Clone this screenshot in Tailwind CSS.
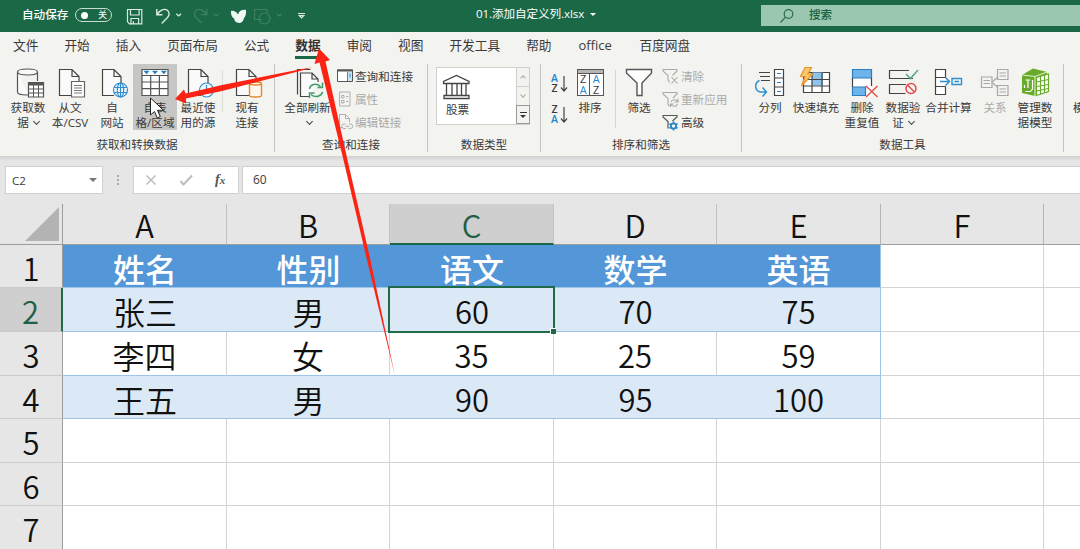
<!DOCTYPE html>
<html lang="zh-CN">
  <head>
    <meta charset="UTF-8" />
    <meta name="viewport" content="width=device-width, initial-scale=1.0" />
    <title>01.添加自定义列.xlsx</title>
    <script src="https://cdn.jsdelivr.net/npm/@tailwindcss/browser@4"></script>
  </head>
  <body class="relative w-[1080px] h-[549px] overflow-hidden flex flex-col bg-[#e6e6e6] text-[#3b3a39] font-['Open_Sans','Noto_Sans_CJK_SC',sans-serif]">
    <!-- Title bar -->
    <header class="h-8 shrink-0 flex items-start bg-[#1a6846] text-white">
      <span class="w-[53px] ml-[22px] leading-[29px] text-[11.6px] font-medium whitespace-nowrap">自动保存</span>
      <div class="mt-2 w-[37px] h-[14px] rounded-full border border-[#c9ddd2] flex items-center justify-between pl-[5px] pr-[4px]">
        <span class="w-[7px] h-[7px] rounded-full bg-white"></span>
        <span class="text-[9px] leading-[12px]">关</span>
      </div>
      <svg class="ml-[8px] w-[190px] h-8" viewBox="120 0 190 32" fill="none" stroke="#dcebe2" stroke-width="1.2">
        <path d="M127.5 9.5h14.3v14.3h-12.3l-2-2zM130.5 9.5v5.5h8.6V9.5M131 23.8v-5.3h7.6v5.3M133.4 21.2v2.6" />
        <path d="M156.8 9v5.7h5.6M157 14.5c3-4.6 7.5-6.300 10.300-4.200 2.500 1.900 2.200 5.200.2 7.300l-5.800 5.800" stroke-width="1.400" />
        <path d="M176.300 13.700l2.400 2.200 2.400-2.200" stroke-width="1.300" />
        <g stroke="#3f8263">
          <path d="M206.800 9v5.700h-5.600M206.600 14.500c-3-4.600-7.500-6.300-10.300-4.200-2.500 1.900-2.200 5.200-.2 7.300l5.400 5.400" />
          <path d="M214 13.700l2.400 2.200 2.400-2.200M276.800 13.700l2.400 2.200 2.400-2.200" />
          <path d="M262 19.500h-7.500V9.500H267v3.500" />
          <circle cx="264.500" cy="18.500" r="5.500" />
        </g>
        <path d="M231 11c2.500-.6 5.300.6 7 3.600.8-3.200 3.800-5.300 8-4.600.3 3.500-.2 6.500-2.200 8.200.2 1.700-1.800 4.800-4.600 4.800-3.400-.3-5.200-2.300-4.900-4.300-2.400-1-3.500-4-3.300-7.700z" fill="#eef7f1" stroke="none" />
        <path d="M298 13.500h7M299.300 15.600h4.400l-2.200 2.200z" />
      </svg>
      <span class="ml-[166px] leading-[28px] text-[11.6px] tracking-[-0.1px] whitespace-nowrap">01.添加自定义列.xlsx</span>
      <span class="ml-[6px] mt-[13px] border-x-[3px] border-t-[3px] border-x-transparent border-t-white"></span>
      <div class="ml-auto mt-[5px] w-[319px] h-[21px] flex items-center bg-[#9bc7b0] text-[#17603f]">
        <svg class="ml-[18px] w-4 h-4" viewBox="0 0 16 16" fill="none" stroke="#2d6b4c" stroke-width="1.200">
          <circle cx="9.500" cy="6" r="4.300" />
          <path d="M6.500 9.200L1.500 14.500" />
        </svg>
        <span class="ml-[14px] text-[11.600px] leading-[18px] mb-[2px] font-medium">搜索</span>
      </div>
    </header>

    <!-- Ribbon tabs -->
    <nav class="h-7 shrink-0 flex gap-[26px] pl-[13px] bg-[#f3f3f0] text-[12.700px] leading-[27px] whitespace-nowrap">
      <a>文件</a>
      <a>开始</a>
      <a>插入</a>
      <a>页面布局</a>
      <a>公式</a>
      <a class="h-[27px] border-b-[3px] border-[#1a6846] font-semibold text-[#333]">数据</a>
      <a>审阅</a>
      <a>视图</a>
      <a>开发工具</a>
      <a>帮助</a>
      <a class="ml-px w-[35px] text-[13px]">office</a>
      <a>百度网盘</a>
    </nav>

    <!-- Ribbon -->
    <section class="h-24 shrink-0 flex pt-1 bg-[#f3f3f0] text-[11.600px] leading-[15px] text-center whitespace-nowrap">
      <!-- Get & transform -->
      <div class="w-[275px] h-[88px] flex flex-col border-r border-[#c4c4c2]">
        <div class="h-[75px] flex pl-[7px]">
          <div class="w-[42px]">
            <svg class="w-full h-9" viewBox="7 64 42 36" fill="none" stroke="#555" stroke-width="1.200">
              <path d="M17.500 72v20c0 1.800 4 3 9 3h2M37.500 72v9M17.500 72c0-4 20-4 20 0s-20 4-20 0z" fill="#fafafa" />
              <path d="M28.500 82.500h15v14.500h-15z" fill="#fff" />
              <path d="M28.500 84h15" stroke-width="3" />
              <path d="M28.500 89h15M28.500 93h15M33.500 83v14M38.500 83v14" stroke-width="1" />
            </svg>
            <div>获取数<br />据 <span class="inline-block w-[5px] h-[5px] mb-[3px] ml-[2px] border-r border-b border-[#444] rotate-45"></span></div>
          </div>
          <div class="w-[42px]">
            <svg class="w-full h-9" viewBox="49 64 42 36" fill="none" stroke="#444" stroke-width="1.200">
              <path d="M71 95.500H59.500v-26H72l7 7V81M72 69.500v7h7" fill="#fafafa" />
              <path d="M71.500 81.500h13v15.500h-13z" fill="#fff" stroke="#666" />
              <path d="M74 85.500h8M74 88h8M74 90.500h8M74 93h8" stroke="#777" stroke-width="1" />
            </svg>
            <div class="flex flex-col items-center"><span>从文</span><span>本/CSV</span></div>
          </div>
          <div class="w-[42px]">
            <svg class="w-full h-9" viewBox="91 64 42 36" fill="none" stroke="#444" stroke-width="1.200">
              <path d="M114 95.500H102.500v-26H114l7 7V83M114 69.500v7h7" fill="#fafafa" />
              <g stroke="#2f8fcf">
                <circle cx="120.500" cy="90" r="7" fill="#f3fafe" />
                <ellipse cx="120.500" cy="90" rx="3.200" ry="7" />
                <path d="M120.500 83v14M114 87.500h13M114 92.500h13" />
              </g>
            </svg>
            <div>自<br />网站</div>
          </div>
          <div class="w-[44px] h-[66px] bg-[#c6c6c5]">
            <svg class="w-full h-9" viewBox="132.500 64 44 36" fill="none" stroke="#555" stroke-width="1.200">
              <path d="M141.500 69.500h26v26h-26z" fill="#fff" />
              <path d="M141.500 75.500h26M141.500 82h26M141.500 88.700h26M150.200 75.500v20M158.900 75.500v20" />
              <path d="M143.500 71h5l-2.500 3zM152 71h5l-2.500 3zM160.800 71h5l-2.500 3z" fill="#1f7fc4" stroke="#1f7fc4" stroke-width=".5" />
            </svg>
            <div>自表<br />格/区域</div>
          </div>
          <div class="w-[42px]">
            <svg class="w-full h-9" viewBox="176 64 42 36" fill="none" stroke="#444" stroke-width="1.200">
              <path d="M200 95.500H187.500v-26H200l7 7V83M200 69.500v7h7" fill="#fafafa" />
              <circle cx="205.500" cy="90" r="7" fill="#f3fafe" stroke="#2f8fcf" />
              <path d="M205.500 85v5.500h4.500" stroke="#2f8fcf" />
            </svg>
            <div>最近使<br />用的源</div>
          </div>
          <div class="w-px h-[42px] mt-1.5 mx-[3px] bg-[#dcdcda]"></div>
          <div class="w-[42px]">
            <svg class="w-full h-9" viewBox="226 64 42 36" fill="none" stroke="#444" stroke-width="1.200">
              <path d="M250 95.500H236.500v-26H249l7 7V81M249 69.500v7h7" fill="#fafafa" />
              <path d="M249.500 83.500v12c0 2 12 2 12 0v-12c0-2-12-2-12 0s12 2 12 0" fill="#fdf6ec" stroke="#e08a2c" stroke-width="1.400" />
            </svg>
            <div>现有<br />连接</div>
          </div>
        </div>
        <div>获取和转换数据</div>
      </div>

      <!-- Queries & connections -->
      <div class="w-[153px] h-[88px] flex flex-col border-r border-[#c4c4c2]">
        <div class="h-[75px] flex pl-[7px]">
          <div class="w-[51px]">
            <svg class="w-full h-9" viewBox="282 64 51 36" fill="none" stroke="#444" stroke-width="1.200">
              <path d="M297.500 94.500v-25h13" />
              <path d="M309 96.500h-8.500v-23.500H312l6 6v3M312 73v6h6" fill="#fafafa" />
              <g stroke="#3f9d6c" stroke-width="1.500">
                <path d="M309.500 89c.5-4 6-7 11-2.500M322.500 82.500v5h-5M322.500 92c-1 4-7 6.500-11.500 2.500M309.500 98v-5h5" />
              </g>
            </svg>
            <div class="flex flex-col items-center"><span>全部刷新</span><span class="w-[5px] h-[5px] mt-[4px] ml-[3px] border-r border-b border-[#444] rotate-45"></span></div>
          </div>
          <div class="ml-[3px] pt-px flex flex-col gap-[1px] text-left">
            <div class="h-[22px] flex items-center gap-[2px]">
              <svg class="w-[17px] h-4" viewBox="336 68 17 16" fill="none" stroke="#555">
                <path d="M337.500 70h15v11.500h-15z" fill="#fff" />
                <path d="M337 70.500h16" stroke-width="2" />
                <path d="M347.500 72v9" stroke="#2f8fcf" />
                <path d="M348 72h4v9h-4z" fill="#cbe6f7" stroke="none" />
                <path d="M350 73.500v4" stroke="#2f8fcf" />
              </svg>
              <span>查询和连接</span>
            </div>
            <div class="h-[22px] flex items-center gap-[2px] text-[#aaa]">
              <svg class="w-[17px] h-4" viewBox="336 91 17 16" fill="none" stroke="#b0b0b0">
                <path d="M339.500 92h10.500v14h-10.500zM341.500 95.500h2.500v2.500h-2.500zM341.500 100.500h2.500v2.500h-2.500zM346 96.500h2.500M346 101.500h2.500" />
              </svg>
              <span>属性</span>
            </div>
            <div class="h-[22px] flex items-center gap-[2px] text-[#aaa]">
              <svg class="w-[17px] h-4" viewBox="336 114 17 16" fill="none" stroke="#b0b0b0">
                <path d="M342 127.500h-2.500v-13h6l4 4v3.500M345.500 114.500v4h4" />
                <path d="M345.500 124h-1.500a2 2 0 0 0 0 4.500h2M349 124h1.500a2 2 0 0 1 0 4.500h-2M345.500 126.300h4" />
              </svg>
              <span>编辑链接</span>
            </div>
          </div>
        </div>
        <div>查询和连接</div>
      </div>

      <!-- Data types -->
      <div class="w-[113px] h-[88px] flex flex-col border-r border-[#c4c4c2]">
        <div class="h-[75px] pl-2 pt-[3px]">
          <div class="w-[94px] h-[58px] flex border border-[#cfcfcf] bg-white">
            <div class="w-[79px] pt-[6px] pr-[39px]">
              <svg class="ml-[5px] w-7 h-[27px]" viewBox="442 74 28 27" fill="none" stroke="#444" stroke-width="1.300">
                <path d="M443.500 83.500v-2L456.500 75.500l12.500 6v2zM444 95.500h25v3h-25z" />
                <path d="M446.500 84v11M452 84v11M457 84v11M461.500 84v11M466 84v11" />
              </svg>
              <div class="mt-[1px] pl-[1px]">股票</div>
            </div>
            <div class="w-[13px] flex flex-col border-l border-[#cfcfcf] bg-[#f3f3f0]">
              <div class="h-[19px] flex items-center justify-center border-b border-[#cfcfcf]"><span class="w-1 h-1 mt-[2px] border-l border-t border-[#aaa] rotate-45"></span></div>
              <div class="h-[18px] flex items-center justify-center"><span class="w-1 h-1 mb-[2px] border-r border-b border-[#aaa] rotate-45"></span></div>
              <div class="h-[19px] -ml-px -mr-px flex flex-col items-center justify-center gap-[2px] border border-[#999]">
                <span class="w-[7px] h-px bg-[#333]"></span>
                <span class="border-x-[3px] border-t-[3px] border-x-transparent border-t-[#333]"></span>
              </div>
            </div>
          </div>
        </div>
        <div>数据类型</div>
      </div>

      <!-- Sort & filter -->
      <div class="w-[201px] h-[88px] flex flex-col border-r border-[#c4c4c2]">
        <div class="h-[75px] flex pl-[9px]">
          <div class="w-[20px] flex flex-col pt-[9px] gap-[9px] text-[10.500px] leading-[10px] font-semibold">
            <div class="h-[22px] flex gap-px">
              <div class="w-[9px]"><div class="text-[#2188cc]">A</div><div>Z</div></div>
              <svg class="w-[8px] h-[20px]" viewBox="0 0 8 20" fill="none" stroke="#444" stroke-width="1.200"><path d="M4 3v15M1 14.500l3 3.500 3-3.500" /></svg>
            </div>
            <div class="h-[22px] flex gap-px">
              <div class="w-[9px]"><div>Z</div><div class="text-[#2188cc]">A</div></div>
              <svg class="w-[8px] h-[20px]" viewBox="0 0 8 20" fill="none" stroke="#444" stroke-width="1.200"><path d="M4 3v15M1 14.500l3 3.500 3-3.500" /></svg>
            </div>
          </div>
          <div class="w-10">
            <div class="h-9 pt-[5px] flex justify-center">
              <div class="w-[27px] h-[27px] border border-[#555] bg-white text-[11px] leading-[10.500px]">
                <div class="h-1 bg-[#b5b5b5] border-b border-[#555]"></div>
                <div class="h-[21px] grid grid-cols-2 divide-x divide-[#555]">
                  <div><div>Z</div><div class="text-[#2188cc]">A</div></div>
                  <div><div class="text-[#2188cc]">A</div><div>Z</div></div>
                </div>
              </div>
            </div>
            <div>排序</div>
          </div>
          <div class="w-px h-[58px] mt-1.5 ml-[5px] bg-[#d4d4d2]"></div>
          <div class="w-[46px]">
            <svg class="w-full h-9" viewBox="616 64 46 36" fill="none" stroke="#555" stroke-width="1.400">
              <path d="M626.500 69.500h25v3.500l-9.500 10v12.500h-5V83l-10.500-10z" fill="#fff" />
            </svg>
            <div>筛选</div>
          </div>
          <div class="pt-px flex flex-col gap-[1px] text-left">
            <div class="h-[22px] flex items-center gap-[2px] text-[#aaa]">
              <svg class="w-[17px] h-[17px]" viewBox="0 0 17 17" fill="none" stroke="#aaa" stroke-width="1.100"><path d="M8 14.500L6 12V7.500L1 3V1.500h14V3l-4.500 4.500M9.500 9l6 6.500M15.500 9l-6 6.500" /></svg>
              <span>清除</span>
            </div>
            <div class="h-[22px] flex items-center gap-[2px] text-[#aaa]">
              <svg class="w-[17px] h-[17px]" viewBox="0 0 17 17" fill="none" stroke="#aaa" stroke-width="1.100"><path d="M7.500 15L6 13.500V7.500L1 3V1.500h14V3l-4 4M9 11c1-3 5-3 6.500-.5M16 7.500v3.500h-3.500M15.500 13c-1 3-5 3-6.500.5M8.500 16v-3H12" /></svg>
              <span>重新应用</span>
            </div>
            <div class="h-[22px] flex items-center gap-[2px]">
              <svg class="w-[17px] h-[17px]" viewBox="0 0 17 17" fill="none" stroke="#555" stroke-width="1.200"><path d="M6 14.500V7.500L1 3V1.500h14V3l-4.500 4" /><circle cx="11.500" cy="12" r="2.600" stroke="#2188cc" stroke-width="1.800" /><path d="M11.500 7.500v2M11.500 14.500v2M7.500 9.800l1.700 1M13.800 13.200l1.700 1M7.500 14.200l1.700-1M13.800 10.800l1.700-1" stroke="#2188cc" stroke-width="1.600" /></svg>
              <span>高级</span>
            </div>
          </div>
        </div>
        <div>排序和筛选</div>
      </div>

      <!-- Data tools -->
      <div class="w-[322px] h-[88px] flex flex-col border-r border-[#c4c4c2]">
        <div class="h-[75px] flex pl-2">
          <div class="w-10">
            <svg class="w-full h-9" viewBox="750 64 40 36" fill="none" stroke="#444" stroke-width="1.200">
              <path d="M759 72.500h11M760 76.500h10M761 80.500h9" />
              <path d="M774.500 69.500h9v26h-9zM774.500 78h9M774.500 87h9" fill="#fff" />
              <path d="M777 73.500h4M777 82.500h4M777 91.500h4" stroke="#2188cc" />
              <path d="M759.500 80.500c-5 2-5.500 10 1 11.500h5.500M762.500 87.500l4 4.500-4 4.500" stroke="#2f8fcf" stroke-width="1.500" />
            </svg>
            <div>分列</div>
          </div>
          <div class="w-[52px]">
            <svg class="w-full h-9" viewBox="790 64 52 36" fill="none" stroke="#444" stroke-width="1.200">
              <path d="M803.500 72.500h26v20h-26z" fill="#fff" />
              <path d="M812 72.500h11v13h-11z" fill="#8cc4ec" stroke="none" />
              <path d="M803 79.500h26.500M803 86h26.500M812 72.500v20M822 72.500v20" />
              <path d="M805 67.500h6.500l-3.500 6.500h4.500L801.500 86l3.500-9.500h-4.500z" fill="#fbc768" stroke="#e8912d" />
            </svg>
            <div>快速填充</div>
          </div>
          <div class="w-10">
            <svg class="w-full h-9" viewBox="842 64 40 36" fill="none" stroke="#444" stroke-width="1.200">
              <path d="M852.500 69.500h19v26h-19z" fill="#fff" stroke="none" />
              <path d="M852.500 69.500h19v8.500h-19zM852.500 87h13v8.500h-13z" fill="#6db4ea" stroke="#2c7fc0" />
              <path d="M852.500 78v9M871.500 78v8" />
              <path d="M866 86l11.500 11M877.500 86L866 97" stroke="#e0504f" stroke-width="1.400" />
            </svg>
            <div>删除<br />重复值</div>
          </div>
          <div class="w-[42px]">
            <svg class="w-full h-9" viewBox="882 64 42 36" fill="none" stroke="#444" stroke-width="1.200">
              <path d="M909 70.500h-19.500v8H913M906 84.500h-16.500v9h16" />
              <path d="M906 74l4.500 4.500 7.500-8.500" stroke="#5aa888" stroke-width="1.600" />
              <circle cx="911" cy="88.500" r="5" stroke="#e0504f" stroke-width="1.500" />
              <path d="M907.500 85l7 7" stroke="#e0504f" stroke-width="1.500" />
            </svg>
            <div>数据验<br />证 <span class="inline-block w-[5px] h-[5px] mb-[3px] ml-[2px] border-r border-b border-[#444] rotate-45"></span></div>
          </div>
          <div class="w-[49px]">
            <svg class="w-full h-9" viewBox="924 64 49 36" fill="none" stroke="#444" stroke-width="1.200">
              <path d="M945.500 77.500v-8h-10v25h10v-8M935.500 77.500h10M935.500 86.500h10" fill="#fff" />
              <path d="M940 81.500h9M945.500 77.500l4 4-4 4M952 78.500h9.500v6H952zM954.500 81.500h4.500" stroke="#2f8fcf" stroke-width="1.400" />
            </svg>
            <div>合并计算</div>
          </div>
          <div class="w-11 text-[#aaa]">
            <svg class="w-full h-9" viewBox="973 64 44 36" fill="none" stroke="#a8a8a8" stroke-width="1.200">
              <path d="M981.500 77h10.500v10.500h-10.500zM983.500 80.500h6.500M983.500 83.500h6.500" />
              <path d="M997.500 69.500H1008v10h-10.500zM999.500 73h6.500M999.500 76h6.500M997.500 85.500H1008v10h-10.500zM999.500 89h6.500M999.500 92h6.500" />
              <path d="M992 82l6-5M992 82.500l6 5" />
            </svg>
            <div>关系</div>
          </div>
          <div class="w-9">
            <svg class="w-full h-9" viewBox="1017 64 36 36" fill="none" stroke="#fff" stroke-width="1.200">
              <path d="M1022 75l11-6.500 14 3.500v19l-12 5-13-3z" fill="#6aaa2a" stroke="none" />
              <path d="M1022 75l13 1.500v20M1035 76.500l12-4.500" stroke="#d9eec4" />
              <path d="M1036.500 77.500l12-3.500v17.500l-12 4z" fill="#fff" stroke="#6aaa2a" />
              <path d="M1036.500 82l12-2.500M1036.500 86.500l12-2M1036.500 91l12-2.500M1040.500 76.500v18M1044.500 75v18" stroke="#6aaa2a" />
              <path d="M1025.500 80h4.500M1028 80v8M1024.500 88v-3M1030.500 91.500h-5M1032.500 80v9l-2 2.500" />
            </svg>
            <div>管理数<br />据模型</div>
          </div>
        </div>
        <div>数据工具</div>
      </div>
      <div class="w-4 pt-9 pl-[9px] overflow-hidden text-left">模</div>
    </section>
    <div class="h-[5px] shrink-0 bg-linear-to-b from-[#d0d0d0] to-[#e6e6e6]"></div>

    <!-- Formula bar -->
    <section class="h-[43px] shrink-0 flex pt-[5px] pl-[5px] text-[12px] leading-[25px]">
      <div class="w-[98px] h-[28px] flex items-center justify-between pl-[6px] pr-[5px] bg-white border border-[#cfcfcf]">
        <span class="text-[11.500px]">C2</span>
        <span class="border-x-[4px] border-t-[4px] border-x-transparent border-t-[#777]"></span>
      </div>
      <div class="w-[30px] h-[28px] flex flex-col items-center justify-center gap-[2px]">
        <span class="size-[2px] bg-[#aaa]"></span>
        <span class="size-[2px] bg-[#aaa]"></span>
        <span class="size-[2px] bg-[#aaa]"></span>
      </div>
      <div class="w-[106px] h-[28px] flex items-center bg-white border border-[#cfcfcf]">
        <svg class="w-[81px] h-[26px]" viewBox="134 167 81 26" fill="none" stroke="#bdbdbd" stroke-width="1.500">
          <path d="M146.500 175.500l9 9M155.500 175.500l-9 9" />
          <path d="M180.500 181l3 3.500 8.500-9" stroke-width="2" />
        </svg>
        <span class="font-['Liberation_Serif',serif] italic font-bold text-[14px] leading-[20px] text-[#555]">f<span class="text-[11px]">x</span></span>
      </div>
      <div class="ml-[3px] flex-1 h-[28px] pl-[10px] bg-white border border-r-0 border-[#cfcfcf]">60</div>
    </section>

    <!-- Sheet -->
    <main class="relative h-[345px] shrink-0 grid grid-cols-[63px_164px_163px_164px_163px_164px_163px_36px] grid-rows-[41px_43px_44px_44px_43px_44px_43px_43px] bg-white text-center text-[31px] leading-[46px] text-[#111] font-[350] font-['Noto_Sans_CJK_SC',sans-serif]">
      <!-- Column headers -->
      <div class="flex items-end justify-end pr-[3px] pb-[3px] bg-[#e6e6e6] border-r border-b border-[#9c9c9c]"><svg class="w-[34px] h-[34px]" viewBox="0 0 34 34"><path d="M34 0v34H0z" fill="#b3b3b3" /></svg></div>
      <div class="bg-[#e6e6e6] border-r border-b border-r-[#c2c2c2] border-b-[#9c9c9c] leading-[42px]">A</div>
      <div class="bg-[#e6e6e6] border-r border-b border-r-[#c2c2c2] border-b-[#9c9c9c] leading-[42px]">B</div>
      <div class="bg-[#cfcfcf] border-r border-b-2 border-r-[#c2c2c2] border-b-[#1a6846] text-[#1f6046] leading-[42px]">C</div>
      <div class="bg-[#e6e6e6] border-r border-b border-r-[#c2c2c2] border-b-[#9c9c9c] leading-[42px]">D</div>
      <div class="bg-[#e6e6e6] border-r border-b border-r-[#b4b4b4] border-b-[#9c9c9c] leading-[42px]">E</div>
      <div class="bg-[#e6e6e6] border-r border-b border-r-[#b4b4b4] border-b-[#9c9c9c] leading-[42px]">F</div>
      <div class="bg-[#e6e6e6] border-b border-[#9c9c9c]"></div>

      <!-- Row 1 -->
      <div class="bg-[#e6e6e6] border-r border-b border-r-[#9c9c9c] border-b-[#cacaca]">1</div>
      <div class="bg-[#5397d8] border-b border-[#9dc3e6] text-white text-[32px] font-medium">姓名</div>
      <div class="bg-[#5397d8] border-b border-[#9dc3e6] text-white text-[32px] font-medium">性别</div>
      <div class="bg-[#5397d8] border-b border-[#9dc3e6] text-white text-[32px] font-medium">语文</div>
      <div class="bg-[#5397d8] border-b border-[#9dc3e6] text-white text-[32px] font-medium">数学</div>
      <div class="bg-[#5397d8] border-r border-b border-[#9dc3e6] text-white text-[32px] font-medium">英语</div>
      <div class="border-r border-b border-[#d4d4d4]"></div>
      <div class="border-b border-[#d4d4d4]"></div>

      <!-- Row 2 -->
      <div class="bg-[#cfcfcf] border-r-2 border-b border-r-[#1f6b47] border-b-[#cacaca] text-[#1f6046]">2</div>
      <div class="bg-[#dbe8f5] border-b border-[#9dc3e6] text-[32px]">张三</div>
      <div class="bg-[#dbe8f5] border-b border-[#9dc3e6] text-[32px]">男</div>
      <div class="relative bg-[#dbe8f5] border-b border-[#9dc3e6]">
        60
        <div class="absolute -left-[2px] -top-[2px] w-[167px] h-[47px] border-2 border-[#1f6b47]"></div>
        <div class="absolute -right-[2px] -bottom-[3px] size-[6px] border-l border-t border-white bg-[#1f6b47]"></div>
      </div>
      <div class="bg-[#dbe8f5] border-b border-[#9dc3e6]">70</div>
      <div class="bg-[#dbe8f5] border-r border-b border-[#9dc3e6]">75</div>
      <div class="border-r border-b border-[#d4d4d4]"></div>
      <div class="border-b border-[#d4d4d4]"></div>

      <!-- Row 3 -->
      <div class="bg-[#e6e6e6] border-r border-b border-r-[#9c9c9c] border-b-[#cacaca]">3</div>
      <div class="border-r border-b border-r-[#d4d4d4] border-b-[#9dc3e6] text-[32px]">李四</div>
      <div class="border-r border-b border-r-[#d4d4d4] border-b-[#9dc3e6] text-[32px]">女</div>
      <div class="border-r border-b border-r-[#d4d4d4] border-b-[#9dc3e6]">35</div>
      <div class="border-r border-b border-r-[#d4d4d4] border-b-[#9dc3e6]">25</div>
      <div class="border-r border-b border-[#9dc3e6]">59</div>
      <div class="border-r border-b border-[#d4d4d4]"></div>
      <div class="border-b border-[#d4d4d4]"></div>

      <!-- Row 4 -->
      <div class="bg-[#e6e6e6] border-r border-b border-r-[#9c9c9c] border-b-[#cacaca]">4</div>
      <div class="bg-[#dbe8f5] border-b border-[#9dc3e6] text-[32px]">王五</div>
      <div class="bg-[#dbe8f5] border-b border-[#9dc3e6] text-[32px]">男</div>
      <div class="bg-[#dbe8f5] border-b border-[#9dc3e6]">90</div>
      <div class="bg-[#dbe8f5] border-b border-[#9dc3e6]">95</div>
      <div class="bg-[#dbe8f5] border-r border-b border-[#9dc3e6]">100</div>
      <div class="border-r border-b border-[#d4d4d4]"></div>
      <div class="border-b border-[#d4d4d4]"></div>

      <!-- Row 5 -->
      <div class="bg-[#e6e6e6] border-r border-b border-r-[#9c9c9c] border-b-[#cacaca]">5</div>
      <div class="border-r border-b border-[#d4d4d4]"></div>
      <div class="border-r border-b border-[#d4d4d4]"></div>
      <div class="border-r border-b border-[#d4d4d4]"></div>
      <div class="border-r border-b border-[#d4d4d4]"></div>
      <div class="border-r border-b border-[#d4d4d4]"></div>
      <div class="border-r border-b border-[#d4d4d4]"></div>
      <div class="border-b border-[#d4d4d4]"></div>

      <!-- Row 6 -->
      <div class="bg-[#e6e6e6] border-r border-b border-r-[#9c9c9c] border-b-[#cacaca]">6</div>
      <div class="border-r border-b border-[#d4d4d4]"></div>
      <div class="border-r border-b border-[#d4d4d4]"></div>
      <div class="border-r border-b border-[#d4d4d4]"></div>
      <div class="border-r border-b border-[#d4d4d4]"></div>
      <div class="border-r border-b border-[#d4d4d4]"></div>
      <div class="border-r border-b border-[#d4d4d4]"></div>
      <div class="border-b border-[#d4d4d4]"></div>

      <!-- Row 7 -->
      <div class="bg-[#e6e6e6] border-r border-[#9c9c9c]">7</div>
      <div class="border-r border-[#d4d4d4]"></div>
      <div class="border-r border-[#d4d4d4]"></div>
      <div class="border-r border-[#d4d4d4]"></div>
      <div class="border-r border-[#d4d4d4]"></div>
      <div class="border-r border-[#d4d4d4]"></div>
      <div class="border-r border-[#d4d4d4]"></div>
      <div></div>
    </main>

    <!-- Annotation arrows and mouse pointer -->
    <svg class="absolute left-0 top-0 w-[1080px] h-[549px] pointer-events-none" viewBox="0 0 1080 549">
      <g fill="#fb2314">
        <path d="M175 99l9-9.500 1.500 4L222 85l80-16 10-1.500-10 3-80 20.500-36 7.500v5z" />
        <path d="M319 48.500L330 60l-4.500 1.500L347.500 160l22.500 98 25 118-28.500-118-23-98L319.500 62.500 314.500 64z" />
      </g>
      <path d="M150.500 98v17l4-3.500 2.800 6.500 3-1.500-2.800-6.200h6z" fill="#fff" stroke="#222" stroke-width="1" />
    </svg>
  </body>
</html>
